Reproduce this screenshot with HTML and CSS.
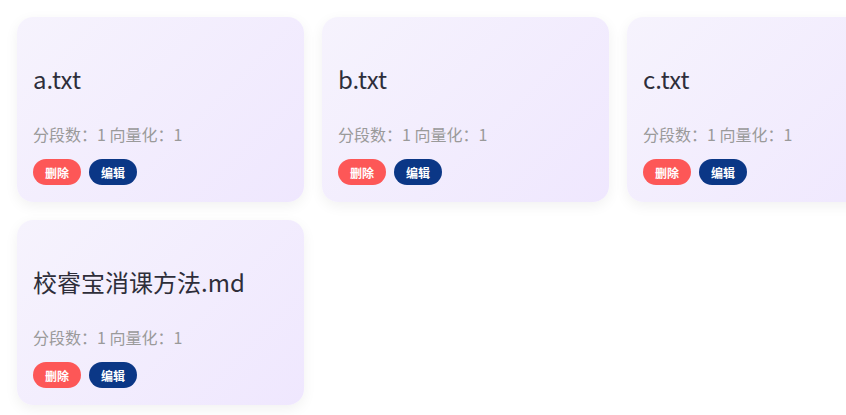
FILE: index.html
```html
<!DOCTYPE html>
<html lang="zh-CN">
<head>
  <meta charset="UTF-8">
  <title>知识库文件</title>
  <link rel="stylesheet" href="styles.css">
</head>
<body>

<div class="file-list">
  <div class="file-card">
    <h3 class="file-name">a.txt</h3>
    <div class="file-meta">分段数：1 向量化：1</div>
    <div class="actions">
      <button class="btn btn-delete">删除</button>
      <button class="btn btn-edit">编辑</button>
    </div>
  </div>

  <div class="file-card">
    <h3 class="file-name">b.txt</h3>
    <div class="file-meta">分段数：1 向量化：1</div>
    <div class="actions">
      <button class="btn btn-delete">删除</button>
      <button class="btn btn-edit">编辑</button>
    </div>
  </div>

  <div class="file-card">
    <h3 class="file-name">c.txt</h3>
    <div class="file-meta">分段数：1 向量化：1</div>
    <div class="actions">
      <button class="btn btn-delete">删除</button>
      <button class="btn btn-edit">编辑</button>
    </div>
  </div>

  <div class="file-card">
    <h3 class="file-name">校睿宝消课方法.md</h3>
    <div class="file-meta">分段数：1 向量化：1</div>
    <div class="actions">
      <button class="btn btn-delete">删除</button>
      <button class="btn btn-edit">编辑</button>
    </div>
  </div>
</div>

</body>
</html>
```

FILE: styles.css
```css
body {
  margin: 0;
  padding: 17px;
  font-family: "Noto Sans CJK SC", "Noto Sans", sans-serif;
  background-color: #fff;
  overflow: hidden;
}

.file-list {
  display: grid;
  grid-template-columns: repeat(3, 287px);
  gap: 18px;
}

.file-card {
  height: 185px;
  box-sizing: border-box;
  padding: 16px;
  border-radius: 16px;
  background: linear-gradient(135deg, #f6f3fd 0%, #efe7fe 100%);
  box-shadow: 0 4px 14px rgba(0, 0, 0, 0.06);
}

.file-name {
  margin: 29px 0 0;
  font-size: 24px;
  font-weight: normal;
  line-height: 34px;
  color: #2e2e3a;
}

.file-meta {
  margin-top: 26px;
  font-size: 16px;
  line-height: 24px;
  color: #9a9a9a;
}

.actions {
  display: flex;
  gap: 8px;
  margin-top: 13px;
}

.btn {
  width: 48px;
  height: 26px;
  padding: 0;
  border: none;
  border-radius: 13px;
  font-family: inherit;
  font-size: 12px;
  font-weight: bold;
  color: #fff;
  cursor: pointer;
}

.btn-delete { background-color: #fd5757; }
.btn-edit { background-color: #0b3786; }
```
